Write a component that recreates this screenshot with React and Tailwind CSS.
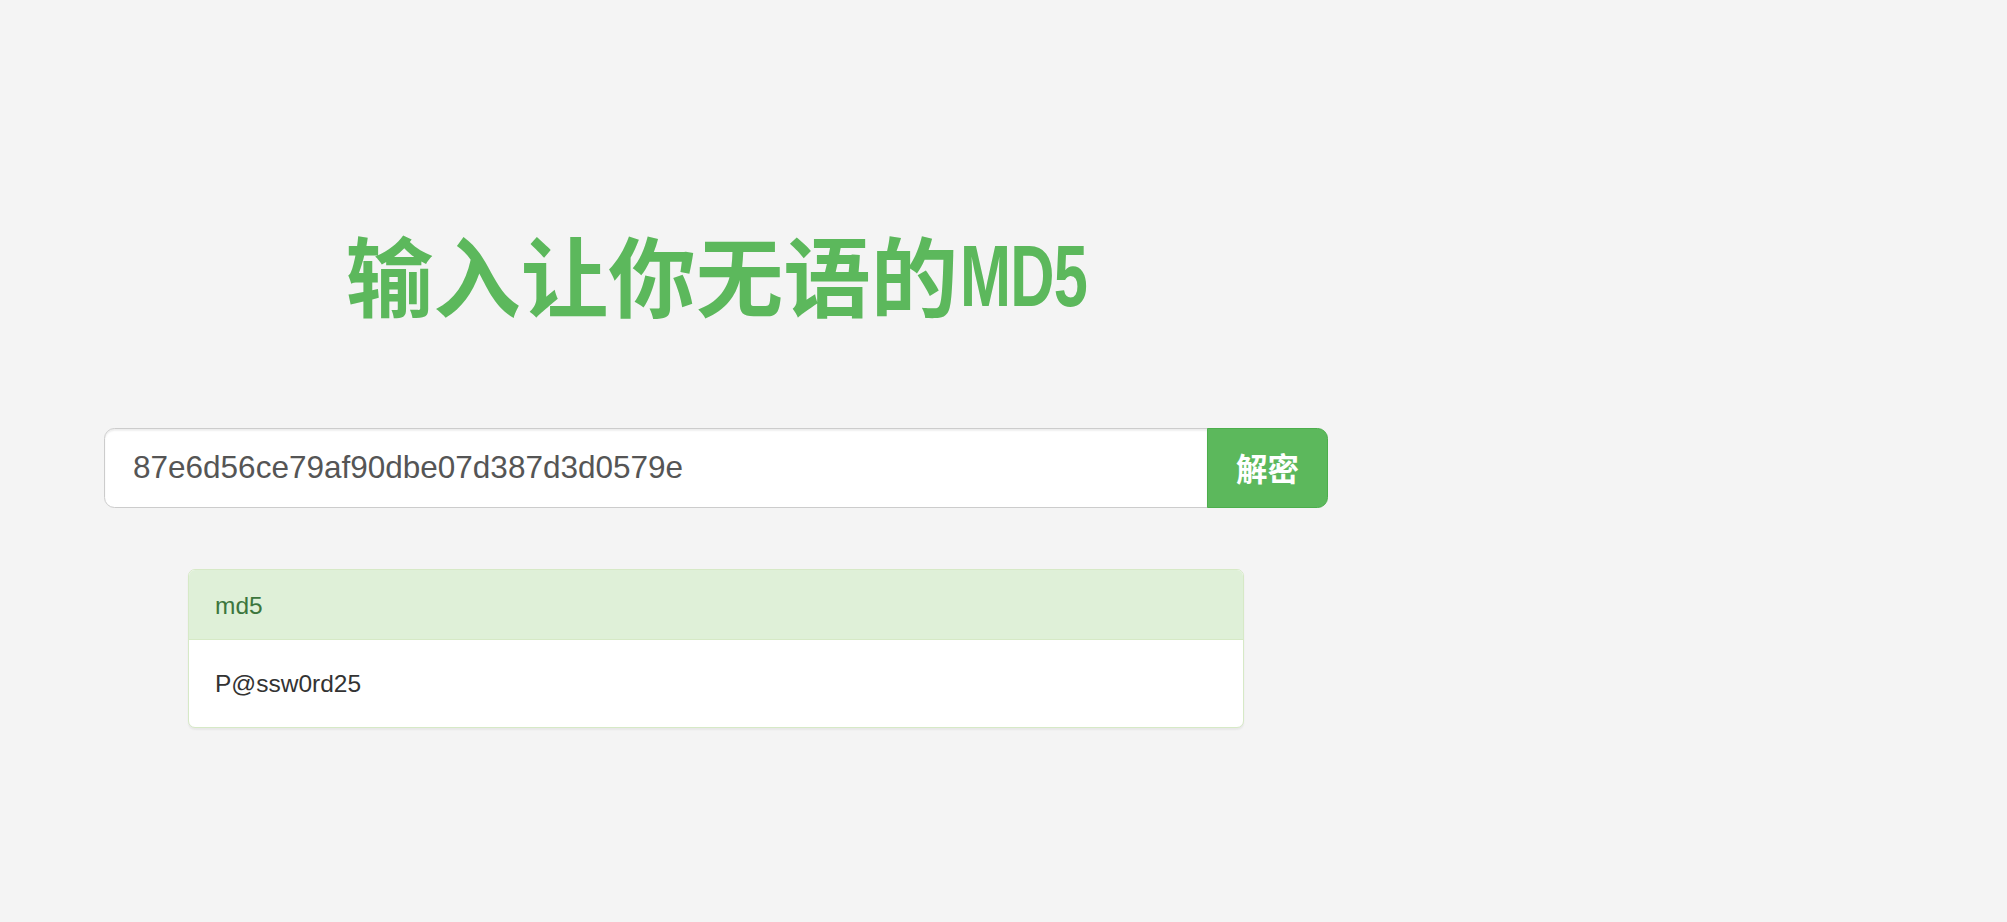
export default function App() {
  return (
    <div className="min-h-[922px] w-full bg-[#f4f4f4] font-['Liberation_Sans','Noto_Sans_CJK_SC',sans-serif]">
      <div className="w-[1432px] pt-[221px]">
        <h1 className="flex justify-center text-[87.5px] leading-[104px] font-bold text-[#5cb85c] font-['Noto_Sans_CJK_SC',sans-serif]">
          <span>输入让你无语的</span>
          <span className="inline-block origin-left scale-x-[0.7] -mr-[56px] ml-[2px] font-['Liberation_Sans',sans-serif] tracking-[-1px] translate-y-[3px]">MD5</span>
        </h1>
        <div className="px-[104px] pt-[103px]">
          <div className="flex h-[80px]">
            <div className="flex flex-1 items-center rounded-l-[10.5px] border border-[#ccc] bg-white pl-[28px] shadow-[inset_0_1.75px_1.75px_rgba(0,0,0,0.075)]">
              <span className="text-[31.5px] text-[#555] font-['Liberation_Sans',sans-serif]">87e6d56ce79af90dbe07d387d3d0579e</span>
            </div>
            <div className="flex w-[121px] items-center justify-center rounded-r-[10.5px] border border-[#4cae4c] bg-[#5cb85c] -ml-px">
              <span className="text-[31.5px] font-bold text-white font-['Noto_Sans_CJK_SC',sans-serif]">解密</span>
            </div>
          </div>
        </div>
        <div className="px-[188px] pt-[61px]">
          <div className="overflow-hidden rounded-[7px] border border-[#d6e9c6] bg-white shadow-[0_1.75px_1.75px_rgba(0,0,0,0.05)]">
            <div className="h-[70px] border-b border-[#d6e9c6] bg-[#dff0d8] px-[26px] py-[17.5px] text-[24.5px] leading-[35px] text-[#3c763d]">md5</div>
            <div className="px-[26px] py-[26px] text-[24.5px] leading-[35px] text-[#333]">P@ssw0rd25</div>
          </div>
        </div>
      </div>
    </div>
  );
}
